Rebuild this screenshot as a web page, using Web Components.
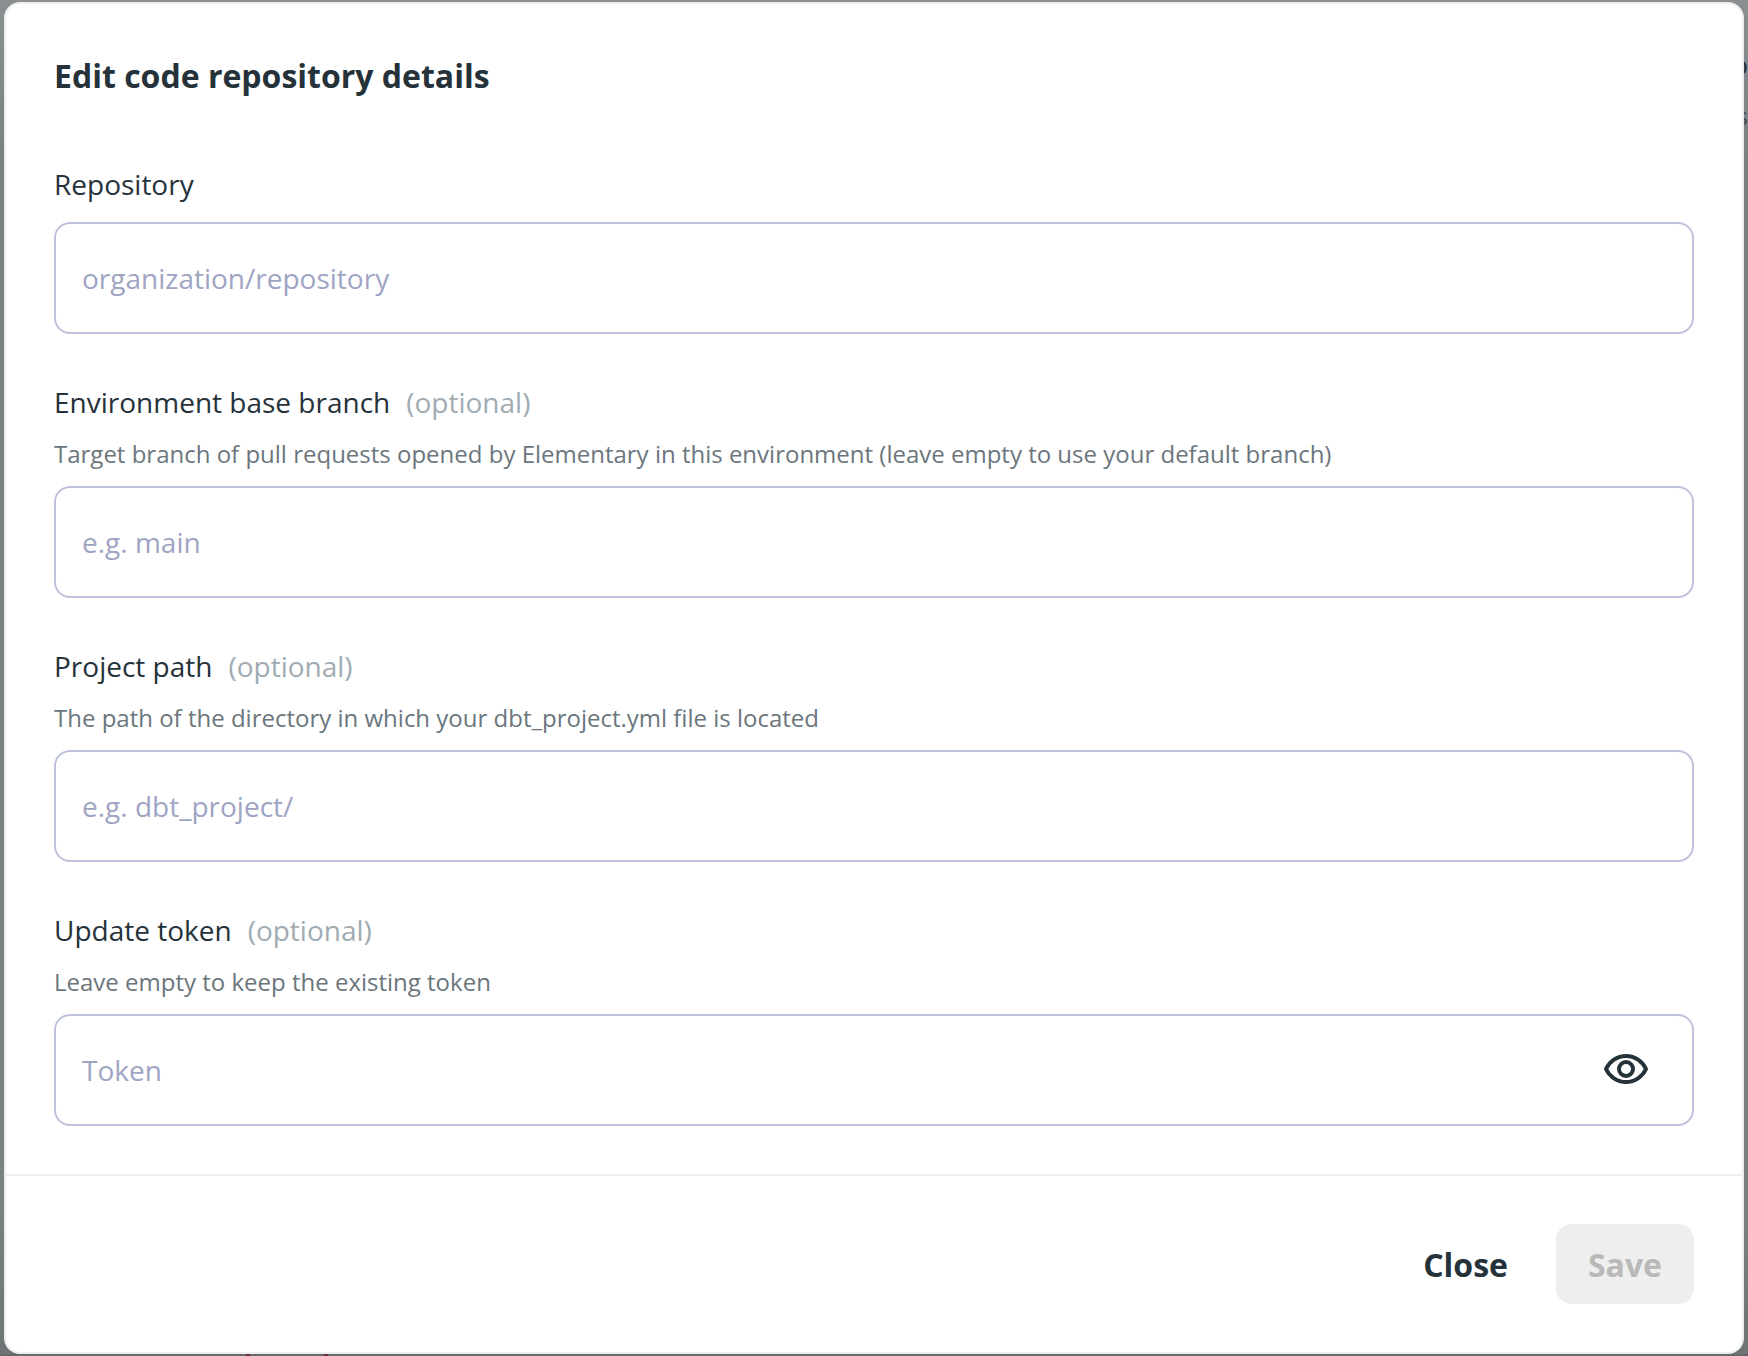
<!DOCTYPE html>
<html lang="en">
<head>
<meta charset="utf-8">
<title>Edit code repository details</title>
<style>
    body
    {
        position: relative;
        margin: 0;
        background: #7b8182;
        color: #26323a;
        font-family: "Open Sans", "Noto Sans", sans-serif;
        font-size: 28px;
    }
</style>
</head>
<body>

<page-backdrop></page-backdrop>

<edit-dialog heading="Edit code repository details">
    <text-field label="Repository" placeholder="organization/repository"></text-field>
    <text-field label="Environment base branch" optional placeholder="e.g. main">Target branch of pull requests opened by Elementary in this environment (leave empty to use your default branch)</text-field>
    <text-field label="Project path" optional placeholder="e.g. dbt_project/">The path of the directory in which your dbt_project.yml file is located</text-field>
    <text-field label="Update token" optional secret placeholder="Token">Leave empty to keep the existing token</text-field>
    <action-button slot="actions" kind="plain">Close</action-button>
    <action-button slot="actions" disabled>Save</action-button>
</edit-dialog>

<script>
(function() {

// the dimmed page that shows around the dialog

const backdropTemplate = document.createElement('template');

backdropTemplate.innerHTML = `
    <style>
        :host
        {
            position: absolute;
            inset: 0;
            display: flex;
            flex-direction: column;
            justify-content: space-between;
            overflow: hidden;
            background: linear-gradient(#8a9092, #7b8182 160px, #7b8182 1200px, #6e7375);
        }

        .side
        {
            padding-top: 44px;
            text-align: right;
            line-height: 40px;
        }

        .side div + div
        {
            margin-top: 12px;
            font-size: 24px;
            color: #3f484c;
        }

        .bottom
        {
            display: flex;
            gap: 74px;
            height: 2px;
            padding-left: 246px;
            background: #66696c;
        }

        .bottom i
        {
            width: 4px;
            background: #6b2b40;
        }
    </style>

    <div class="side">
        <div>o</div>
        <div>s</div>
    </div>
    <div class="bottom"><i></i><i></i></div>
    `;

class PageBackdrop extends HTMLElement
{
    constructor()
    {
        super();

        this.dom = this.attachShadow({mode: 'open'});
        this.dom.appendChild(backdropTemplate.content.cloneNode(true));
    }
}

const dialogTemplate = document.createElement('template');

dialogTemplate.innerHTML = `
    <style>
        :host
        {
            position: relative;
            display: block;
            padding: 2px 4px;
        }

        section
        {
            border: 2px solid #eeeeee;
            border-radius: 16px;
            background: #ffffff;
        }

        .body
        {
            padding: 48px;
        }

        h1
        {
            margin: 0 0 64px;
            font-size: 32px;
            line-height: 48px;
            font-weight: 700;
        }

        .fields
        {
            display: flex;
            flex-direction: column;
            gap: 48px;
        }

        footer
        {
            display: flex;
            justify-content: flex-end;
            gap: 16px;
            padding: 48px;
            border-top: 2px solid #eeeeee;
        }
    </style>

    <section role="dialog" aria-labelledby="heading">
        <div class="body">
            <h1 id="heading"></h1>
            <div class="fields"><slot></slot></div>
        </div>
        <footer><slot name="actions"></slot></footer>
    </section>
    `;

class EditDialog extends HTMLElement
{
    constructor()
    {
        super();

        this.dom = this.attachShadow({mode: 'open'});
        this.dom.appendChild(dialogTemplate.content.cloneNode(true));
    }

    connectedCallback()
    {
        this.dom.querySelector("h1").textContent = this.getAttribute("heading");
    }
}

const fieldTemplate = document.createElement('template');

fieldTemplate.innerHTML = `
    <style>
        :host
        {
            display: flex;
            flex-direction: column;
        }

        .label
        {
            display: flex;
            gap: 16px;
            margin-bottom: 18px;
            line-height: 40px;
        }

        .optional
        {
            color: #a0abb2;
        }

        .hint
        {
            margin-bottom: 16px;
            font-size: 24px;
            line-height: 32px;
            color: #6b767d;
        }

        :host([optional]) .label
        {
            margin-bottom: 16px;
        }

        :host(:not([optional])) .optional,
        :host(:not([optional])) .hint,
        :host(:not([secret])) button
        {
            display: none;
        }

        .box
        {
            display: flex;
            align-items: center;
            height: 108px;
            padding: 0 42px 0 26px;
            border: 2px solid #bfc2dc;
            border-radius: 16px;
        }

        .box:focus-within
        {
            border-color: #7f85b8;
        }

        input
        {
            flex-grow: 1;
            min-width: 0;
            padding: 0;
            border: none;
            outline: none;
            background: none;
            color: inherit;
            font: inherit;
            line-height: 40px;
        }

        input::placeholder
        {
            color: #a0a4c3;
            opacity: 1;
        }

        button
        {
            padding: 0;
            border: none;
            background: none;
            color: inherit;
            cursor: pointer;
        }

        svg
        {
            display: block;
            width: 48px;
            height: 48px;
        }
    </style>

    <div class="label">
        <label for="input"></label>
        <span class="optional">(optional)</span>
    </div>
    <div class="hint" id="hint"><slot></slot></div>
    <div class="box">
        <input id="input" type="text" aria-describedby="hint">
        <button type="button" aria-label="Show token">
            <svg viewBox="0 0 48 48" fill="none" stroke="currentColor" stroke-width="4" stroke-linejoin="round">
                <path d="M4 23C7.500 15.500 15 10 24 10S40.500 15.500 44 23C40.500 30.500 33 36 24 36S7.500 30.500 4 23Z"/>
                <circle cx="24" cy="23" r="7"/>
            </svg>
        </button>
    </div>
    `;

class TextField extends HTMLElement
{
    constructor()
    {
        super();

        this.dom = this.attachShadow({mode: 'open'});
        this.dom.appendChild(fieldTemplate.content.cloneNode(true));
    }

    connectedCallback()
    {
        let input = this.dom.querySelector("input");
        input.placeholder = this.getAttribute("placeholder");
        input.type = this.hasAttribute("secret") ? "password" : "text";

        this.dom.querySelector("label").textContent = this.getAttribute("label");

        this.dom.querySelector("button").addEventListener("click", () =>
        {
            input.type = input.type == "password" ? "text" : "password";
        });
    }
}

const buttonTemplate = document.createElement('template');

buttonTemplate.innerHTML = `
    <style>
        :host
        {
            display: block;
        }

        button
        {
            height: 80px;
            padding: 0 32px;
            border: none;
            border-radius: 16px;
            background: #26323a;
            color: #ffffff;
            font: inherit;
            font-size: 32px;
            font-weight: 700;
            cursor: pointer;
        }

        :host([kind="plain"]) button
        {
            background: none;
            color: inherit;
        }

        button:disabled
        {
            background: #eeeeee;
            color: #b9b9b9;
            cursor: default;
        }
    </style>

    <button type="button"><slot></slot></button>
    `;

class ActionButton extends HTMLElement
{
    constructor()
    {
        super();

        this.dom = this.attachShadow({mode: 'open'});
        this.dom.appendChild(buttonTemplate.content.cloneNode(true));
    }

    connectedCallback()
    {
        this.dom.querySelector("button").disabled = this.hasAttribute("disabled");
    }
}

customElements.define("page-backdrop", PageBackdrop);
customElements.define("edit-dialog", EditDialog);
customElements.define("text-field", TextField);
customElements.define("action-button", ActionButton);

})();
</script>
</body>
</html>
